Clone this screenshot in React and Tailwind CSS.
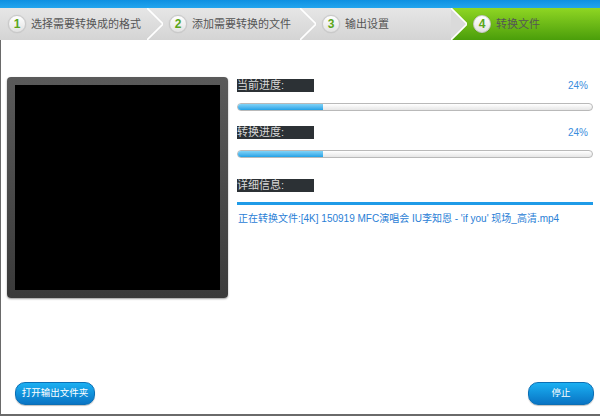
import React from 'react';

const font = { fontFamily: '"Liberation Sans", "Noto Sans CJK SC", sans-serif' };

const steps = [
    { n: 1, label: '选择需要转换成的格式', w: 'w-[147px]' },
    { n: 2, label: '添加需要转换的文件', w: 'w-[137px]' },
    { n: 3, label: '输出设置', w: 'w-[135px]' },
    { n: 4, label: '转换文件', w: 'flex-1', active: true },
];

const Chevron = ({ intoActive }) => (
    <div className={`w-[16px] h-full shrink-0 ${intoActive ? 'bg-gradient-to-b from-[#8fd623] to-[#4a9e0a]' : ''}`}>
        <svg width="16" height="32" viewBox="0 0 16 32">
            {intoActive && <polygon points="0,0 16,16 0,32" fill="#dadada" />}
            <polyline points="0,0 16,16 0,32" fill="none" stroke="#ffffff" strokeWidth="1.6" />
        </svg>
    </div>
);

const StepNum = ({ n }) => (
    <div className="w-[18px] h-[18px] rounded-full border border-[#c8c8c8] bg-gradient-to-b from-white to-[#e2e2e2] flex items-center justify-center shrink-0 shadow-[0_0_1px_rgba(0,0,0,0.2)]">
        <span className="text-[12px] font-bold text-[#5aa61a] leading-none">{n}</span>
    </div>
);

const Label = ({ children }) => (
    <div className="w-[77px] h-[13px] bg-[#2c3135] text-[#d9d9d9] text-[11px] leading-[13px]">{children}</div>
);

const Progress = ({ label, pct }) => (
    <div>
        <div className="flex items-center justify-between">
            <Label>{label}</Label>
            <span className="text-[10px] text-[#3a8ddd] mr-[5px]">{pct}%</span>
        </div>
        <div className="mt-[10px] h-[8px] rounded-full border border-[#b9b9b9] bg-gradient-to-b from-white to-[#e6e6e6] overflow-hidden">
            <div className="h-full bg-gradient-to-b from-[#7fd3f7] to-[#1ea2e6]" style={{ width: `${pct}%` }} />
        </div>
    </div>
);

const BlueButton = ({ children, className = '' }) => (
    <button className={`h-[23px] rounded-[10px] border border-[#0b6fb5] bg-gradient-to-b from-[#1cb0f2] to-[#0a74c4] text-white text-[9.5px] shadow-[0_1px_1px_rgba(0,0,0,0.25)] ${className}`}>
        {children}
    </button>
);

export default function App() {
    return (
        <div className="w-[600px] h-[416px] bg-white flex flex-col overflow-hidden" style={font}>
            <div className="h-[8px] bg-gradient-to-b from-[#0d90e2] to-[#22a5ee]" />
            <div className="h-[32px] flex bg-gradient-to-b from-[#e6e6e6] to-[#d4d4d4]">
                {steps.map((s, i) => (
                    <React.Fragment key={s.n}>
                        {i > 0 && <Chevron intoActive={s.active} />}
                        <div className={`${s.w} h-full flex items-center gap-[5px] ${i === 0 ? 'pl-[8px]' : 'pl-[6px]'} ${s.active ? 'bg-gradient-to-b from-[#8fd623] to-[#4a9e0a]' : ''}`}>
                            <StepNum n={s.n} />
                            <span className="text-[11px] text-[#555]">{s.label}</span>
                        </div>
                    </React.Fragment>
                ))}
            </div>
            <div className="flex-1 flex flex-col border-l border-b-2 border-[#6a6a6a]">
                <div className="flex pt-[37px] pl-[6px]">
                    <div className="w-[221px] h-[221px] rounded-[4px] bg-gradient-to-b from-[#5a5a5a] to-[#3a3a3a] p-[8px] shadow-[0_1px_2px_rgba(0,0,0,0.4)]">
                        <div className="w-full h-full bg-black" />
                    </div>
                    <div className="w-[356px] ml-[9px] pt-[1px]">
                        <Progress label="当前进度:" pct={24} />
                        <div className="mt-[14px]">
                            <Progress label="转换进度:" pct={24} />
                        </div>
                        <div className="mt-[21px]">
                            <Label>详细信息:</Label>
                        </div>
                        <div className="mt-[10px] h-[3px] bg-[#1f9be8]" />
                        <div className="mt-[6px] pl-[1px] text-[10px] text-[#2a80d6] whitespace-nowrap">
                            正在转换文件:[4K] 150919 MFC演唱会 IU李知恩 - 'if you' 现场_高清.mp4
                        </div>
                    </div>
                </div>
                <div className="mt-auto flex justify-between pl-[14px] pr-[6px] pb-[9px]">
                    <BlueButton className="w-[80px]">打开输出文件夹</BlueButton>
                    <BlueButton className="w-[66px]">停止</BlueButton>
                </div>
            </div>
        </div>
    );
}
